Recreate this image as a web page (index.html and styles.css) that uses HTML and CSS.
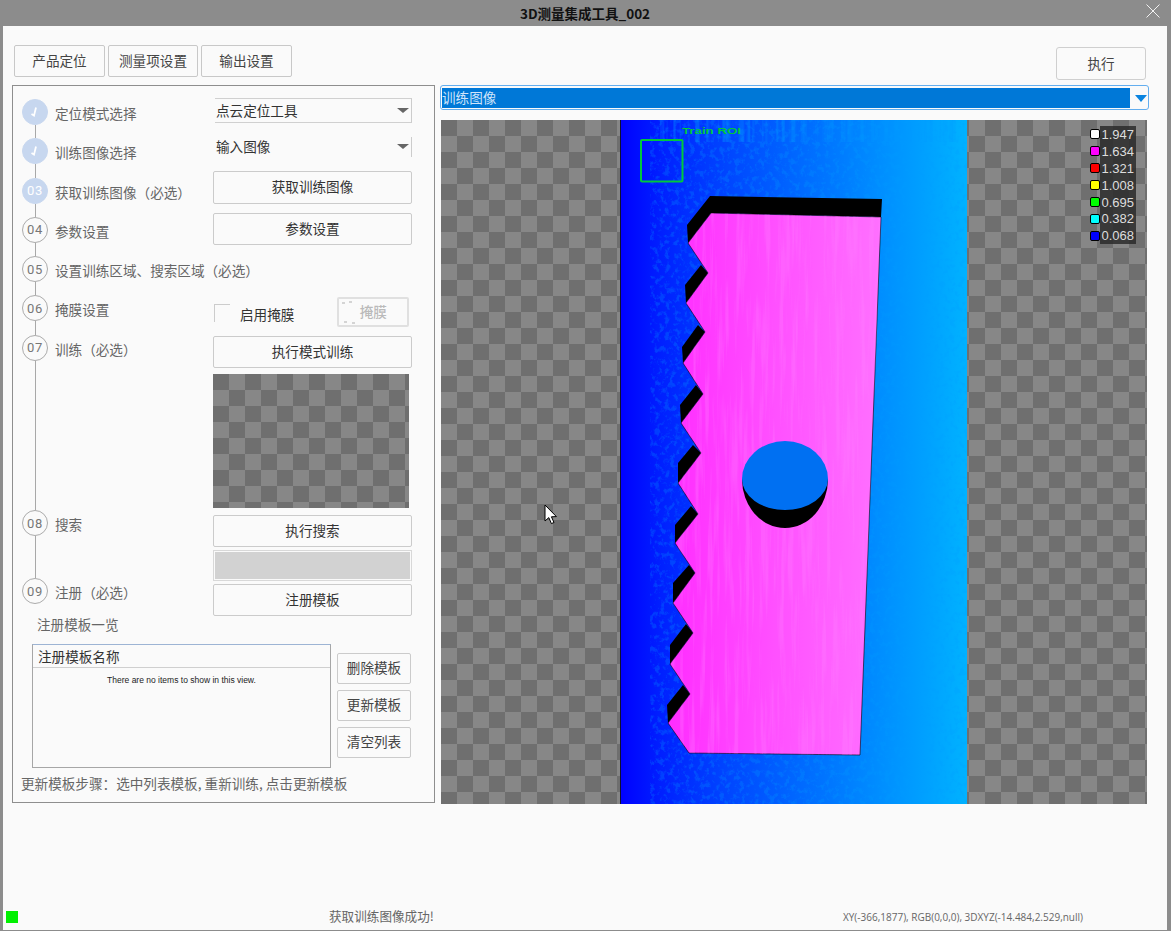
FILE: index.html
```html
<!DOCTYPE html>
<html lang="zh-CN">
<head>
<meta charset="utf-8">
<title>3D测量集成工具_002</title>
<link rel="stylesheet" href="styles.css">
</head>
<body>
<div class="window">
  <header class="titlebar">
    <span class="title">3D测量集成工具_002</span>
    <svg class="close" width="16" height="16" viewBox="0 0 16 16"><path d="M1.5 1.5 L14.5 14.5 M14.5 1.5 L1.5 14.5" stroke="#f2f2f2" stroke-width="1" fill="none"/></svg>
  </header>
  <div class="content">
    <div class="toolbar">
      <div class="tabs">
        <button class="tab">产品定位</button>
        <button class="tab">测量项设置</button>
        <button class="tab">输出设置</button>
      </div>
      <button class="run">执行</button>
    </div>
    <main class="main">
      <section class="panel">
        <div class="wizard">
          <ol class="steps">
            <li class="step">
              <div class="node"><span class="dot done"><svg width="26" height="26" viewBox="0 0 26 26"><path d="M9.5 15 L12 16.6 L14 8.5" stroke="#fff" stroke-width="1.8" fill="none"/></svg></span><i class="wire"></i></div>
              <span class="label">定位模式选择</span>
            </li>
            <li class="step">
              <div class="node"><span class="dot done"><svg width="26" height="26" viewBox="0 0 26 26"><path d="M9.5 15 L12 16.6 L14 8.5" stroke="#fff" stroke-width="1.8" fill="none"/></svg></span><i class="wire"></i></div>
              <span class="label">训练图像选择</span>
            </li>
            <li class="step">
              <div class="node"><span class="dot done">03</span><i class="wire"></i></div>
              <span class="label">获取训练图像（必选）</span>
            </li>
            <li class="step">
              <div class="node"><span class="dot">04</span><i class="wire"></i></div>
              <span class="label">参数设置</span>
            </li>
            <li class="step">
              <div class="node"><span class="dot">05</span><i class="wire"></i></div>
              <span class="label">设置训练区域、搜索区域（必选）</span>
            </li>
            <li class="step">
              <div class="node"><span class="dot">06</span><i class="wire"></i></div>
              <span class="label">掩膜设置</span>
            </li>
            <li class="step step-train">
              <div class="node"><span class="dot">07</span><i class="wire"></i></div>
              <span class="label">训练（必选）</span>
            </li>
            <li class="step step-search">
              <div class="node"><span class="dot">08</span><i class="wire"></i></div>
              <span class="label">搜索</span>
            </li>
            <li class="step">
              <div class="node"><span class="dot">09</span></div>
              <span class="label">注册（必选）</span>
            </li>
          </ol>
          <div class="controls">
            <div class="combo combo-mode"><span>点云定位工具</span><i class="caret"></i></div>
            <div class="combo combo-image"><span>输入图像</span><i class="caret"></i></div>
            <button class="btn btn-grab">获取训练图像</button>
            <button class="btn btn-param">参数设置</button>
            <div class="mask-row">
              <span class="check"></span>
              <span class="check-label">启用掩膜</span>
              <button class="btn-mask">掩膜</button>
            </div>
            <button class="btn btn-train">执行模式训练</button>
            <div class="checker train-preview"></div>
            <button class="btn btn-search">执行搜索</button>
            <div class="result-bar"></div>
            <button class="btn btn-register">注册模板</button>
          </div>
        </div>
        <div class="list-caption">注册模板一览</div>
        <div class="list-row">
          <div class="list">
            <div class="list-head">注册模板名称</div>
            <div class="list-empty">There are no items to show in this view.</div>
          </div>
          <div class="list-actions">
            <button class="btn-side">删除模板</button>
            <button class="btn-side">更新模板</button>
            <button class="btn-side">清空列表</button>
          </div>
        </div>
        <p class="hint">更新模板步骤：选中列表模板, 重新训练, 点击更新模板</p>
      </section>
      <section class="viewer">
        <div class="image-select">
          <span class="image-select-value">训练图像</span>
          <svg class="image-select-arrow" width="12" height="7" viewBox="0 0 12 7"><path d="M0 0 H12 L6 7 Z" fill="#0a84e0"/></svg>
        </div>
        <div class="checker canvas">
          <svg class="depth" width="706" height="684" viewBox="441 120 706 684">
            <defs>
              <linearGradient id="floor" x1="0" x2="1" y1="0" y2="0">
                <stop offset="0" stop-color="#0000ff"/>
                <stop offset=".12" stop-color="#0020ff"/>
                <stop offset=".3" stop-color="#0044ff"/>
                <stop offset=".5" stop-color="#0066ff"/>
                <stop offset=".75" stop-color="#008eff"/>
                <stop offset="1" stop-color="#00b2ff"/>
              </linearGradient>
              <linearGradient id="part" x1="0" x2="1" y1="0" y2="0">
                <stop offset="0" stop-color="#ff2cff"/>
                <stop offset=".5" stop-color="#ff50ff"/>
                <stop offset="1" stop-color="#ff70ff"/>
              </linearGradient>
              <filter id="speckle" x="0" y="0" width="1" height="1" color-interpolation-filters="sRGB">
                <feTurbulence type="fractalNoise" baseFrequency="0.2 0.17" numOctaves="4" seed="7"/>
                <feColorMatrix values="0 0 0 0 0  0 0 0 0 .62  0 0 0 0 1  5 0 0 0 -2.5"/>
              </filter>
              <filter id="streaks" x="0" y="0" width="1" height="1" color-interpolation-filters="sRGB">
                <feTurbulence type="fractalNoise" baseFrequency="0.22 0.003" numOctaves="2" seed="3"/>
                <feColorMatrix values="0 0 0 0 0  0 0 0 0 .6  0 0 0 0 1  4 0 0 0 -1.9"/>
              </filter>
              <filter id="sheen" x="0" y="0" width="1" height="1" color-interpolation-filters="sRGB">
                <feTurbulence type="fractalNoise" baseFrequency="0.2 0.01" numOctaves="3" seed="11"/>
                <feColorMatrix values="0 0 0 0 1  0 0 0 0 .52  0 0 0 0 1  4 0 0 0 -1.9"/>
              </filter>
              <clipPath id="partClip">
                <polygon points="711,213 881,217 860,755 689,753 668,723 690,694 670,664 693,633 673,603 695,573 675,543 698,514 678,483 701,453 681,423 703,394 683,363 705,332 686,303 708,273 688,243"/>
              </clipPath>
            </defs>
            <rect x="620" y="120" width="347" height="684" fill="url(#floor)"/>
            <rect x="650" y="120" width="317" height="684" filter="url(#speckle)" opacity=".26"/>
            <rect x="660" y="120" width="307" height="22" filter="url(#streaks)" opacity=".4"/>
            <rect x="620" y="120" width="1" height="684" fill="#101030"/>
            <g class="shadow">
              <polygon points="710,196 882,199 881,217 711,213 688,243 687,225"/>
              <polygon points="701,265 685,285 686,303 708,273"/>
              <polygon points="698,325 682,347 683,363 705,332"/>
              <polygon points="696,385 680,405 681,423 703,394"/>
              <polygon points="693,445 678,463 678,483 701,453"/>
              <polygon points="691,506 675,525 675,543 698,514"/>
              <polygon points="689,565 673,583 673,603 695,573"/>
              <polygon points="686,624 670,645 670,664 693,633"/>
              <polygon points="683,685 667,705 668,723 690,694"/>
            </g>
            <polygon points="711,213 881,217 860,755 689,753 668,723 690,694 670,664 693,633 673,603 695,573 675,543 698,514 678,483 701,453 681,423 703,394 683,363 705,332 686,303 708,273 688,243" fill="url(#part)" stroke="#000" stroke-width=".6"/>
            <g clip-path="url(#partClip)"><rect x="660" y="210" width="225" height="548" filter="url(#sheen)" opacity=".28"/></g>
            <path d="M742 479 A43 49 0 0 0 828 479 Z" fill="#000"/>
            <path d="M742 479 A43 38 0 0 1 828 479 A43 31 0 0 1 742 479 Z" fill="#0070f2"/>
            <rect x="641" y="140" width="41.5" height="41.5" rx="1" class="roi"/>
            <text x="682" y="134" class="roi-label" textLength="59" lengthAdjust="spacingAndGlyphs">Train ROI</text>
          </svg>
          <ul class="legend">
            <li><i class="swatch c1"></i><span>1.947</span></li>
            <li><i class="swatch c2"></i><span>1.634</span></li>
            <li><i class="swatch c3"></i><span>1.321</span></li>
            <li><i class="swatch c4"></i><span>1.008</span></li>
            <li><i class="swatch c5"></i><span>0.695</span></li>
            <li><i class="swatch c6"></i><span>0.382</span></li>
            <li><i class="swatch c7"></i><span>0.068</span></li>
          </ul>
          <svg class="cursor" width="14" height="22" viewBox="0 0 14 22"><path d="M1 1 V17 L4.8 13.6 L7.4 19.6 L10 18.5 L7.4 12.8 L12.4 12.6 Z" fill="#fff" stroke="#000" stroke-width="1"/></svg>
        </div>
      </section>
    </main>
    <footer class="status">
      <i class="led"></i>
      <span class="status-msg">获取训练图像成功!</span>
      <span class="status-pos">XY(-366,1877), RGB(0,0,0), 3DXYZ(-14.484,2.529,null)</span>
    </footer>
  </div>
</div>
</body>
</html>
```
FILE: styles.css
```css
* { box-sizing: border-box; }
html, body { margin: 0; padding: 0; }
body {
  width: 1171px;
  height: 931px;
  overflow: hidden;
  background: #8c8c8c;
  font-family: "Noto Sans CJK SC", "Liberation Sans", sans-serif;
  font-size: 13.6px;
  color: #333;
}
button { font: inherit; color: inherit; padding: 0; cursor: default; }
ol, ul { list-style: none; margin: 0; padding: 0; }
i { display: block; font-style: normal; }

.window { display: flex; flex-direction: column; height: 931px; padding: 0 4px 1px 3px; }

.titlebar { position: relative; flex: 0 0 26px; display: flex; align-items: center; justify-content: center; padding-bottom: 1px; }
.title { font-size: 13.5px; font-weight: 700; color: #111; }
.close { position: absolute; right: 6px; top: 3px; }

.content { flex: 1; display: flex; flex-direction: column; background: #fafafa; min-height: 0; }

.toolbar { display: flex; justify-content: space-between; align-items: flex-start; padding: 19px 21px 0 11px; height: 59px; }
.tabs { display: flex; gap: 3px; }
.tab { width: 91px; height: 32px; padding-bottom: 2px; background: #fafafa; border: 1px solid #c8c8c8; border-radius: 2px; color: #444; }
.tab:nth-child(2) { width: 90px; }
.run { width: 90px; height: 33px; padding-bottom: 2px; margin-top: 2px; background: #fafafa; border: 1px solid #cfcfcf; border-radius: 3px; color: #444; }

.main { display: flex; gap: 5px; padding-left: 9px; }

.panel { width: 423px; height: 718px; border: 1px solid #8e8e8e; display: flex; flex-direction: column; }

.wizard { display: flex; padding: 12px 0 0 9px; height: 530px; }
.steps { width: 191px; margin-top: 1px; flex: none; }
.step { display: flex; height: 39.25px; gap: 7px; }
.step-train { height: 175.5px; }
.step-search { height: 68px; }
.node { width: 26px; display: flex; flex-direction: column; align-items: center; flex: none; }
.dot {
  flex: none; width: 26px; height: 26px; border-radius: 50%;
  display: flex; align-items: center; justify-content: center;
  border: 1px solid #ababab; background: #fafafa; color: #777;
  font-family: "Roboto", sans-serif; font-size: 13px; letter-spacing: .6px;
}
.dot.done { background: #c7d7ef; border-color: #c7d7ef; color: #fff; }
.dot svg { flex: none; margin: -1px; }
.wire { flex: 1; width: 1px; background: #a8a8a8; }
.label { white-space: nowrap; line-height: 20px; margin-top: 4px; color: #666; }

.controls { width: 199px; display: flex; flex-direction: column; flex: none; }
.combo { position: relative; display: flex; align-items: center; margin-left: 2px; border-right: 1px solid #ccc; padding: 0 0 2px 1px; color: #333; }
.combo-mode { height: 25px; border-top: 1px solid #d0d0d0; border-bottom: 1px solid #d0d0d0; }
.combo-image { height: 20px; margin-top: 14px; }
.caret { position: absolute; right: 2px; top: 50%; margin-top: -3px; width: 0; height: 0; border-left: 6px solid transparent; border-right: 6px solid transparent; border-top: 5px solid #666; }

.btn { width: 199px; height: 32px; padding-bottom: 3px; background: #fafafa; border: 1px solid #cbcbcb; border-radius: 2px; flex: none; }
.btn-grab { height: 33px; margin-top: 14px; }
.btn-param { margin-top: 9px; }
.btn-train { margin-top: 9px; }
.btn-search { margin-top: 7px; }
.btn-register { margin-top: 3px; }

.mask-row { display: flex; height: 30px; margin-top: 52px; position: relative; }
.check { width: 16px; height: 18px; margin: 7px 0 0 1px; border-top: 1px solid #ccc; border-left: 1px solid #ccc; flex: none; }
.check-label { margin-left: 10px; margin-top: 7px; line-height: 20px; color: #333; }
.btn-mask { position: relative; margin-left: 43px; width: 72px; height: 30px; padding-bottom: 3px; background: #fafafa; border: 2px solid #e0e0e0; border-radius: 2px; color: #bababa; font-weight: 500; }
.btn-mask::before { content: ""; position: absolute; left: 3px; top: 3px; width: 3px; height: 2px; background: #d4d4d4; box-shadow: 7px -1px 0 #d4d4d4, 2px 19px 0 #d4d4d4, 10px 20px 0 #d4d4d4; }

.checker { background: conic-gradient(#878787 25%, #6f6f6f 0 50%, #878787 0 75%, #6f6f6f 0) 0 0 / 32px 32px; }
.train-preview { width: 196px; height: 134px; margin-top: 6px; flex: none; }
.result-bar { height: 31px; margin-top: 3px; background: #d2d2d2; border: 2px solid #fafafa; outline: 1px solid #d8d8d8; outline-offset: -1px; flex: none; }

.list-caption { margin: 0 0 0 24px; height: 20px; line-height: 17px; color: #666; }
.list-row { display: flex; gap: 6px; margin: 8px 0 0 19px; }
.list { width: 299px; height: 124px; border: 1px solid #a6a6a6; border-top-color: #9db4d4; background: #fafafa; }
.list-head { height: 23px; line-height: 23px; padding-left: 5px; color: #333; border-bottom: 1px solid #cfcfcf; }
.list-empty { text-align: center; font-family: "Liberation Sans", sans-serif; font-size: 8.5px; line-height: 13px; margin-top: 6px; color: #222; }
.list-actions { display: flex; flex-direction: column; gap: 6px; padding-top: 9px; }
.btn-side { width: 74px; height: 31px; padding-bottom: 3px; background: #fafafa; border: 1px solid #cbcbcb; border-radius: 2px; color: #444; }
.hint { margin: 5px 0 0 8px; line-height: 20px; color: #666; }

.viewer { width: 709px; }
.image-select { display: flex; align-items: center; height: 25px; border: 1px solid #63aeef; border-radius: 3px; padding: 2px 2px 1px 1px; gap: 5px; }
.image-select-value { width: 688px; height: 100%; flex: none; background: #0078d7; color: #cfe4fa; line-height: 18px; }
.image-select-arrow { flex: none; margin-top: 1px; }
.canvas { position: relative; width: 706px; height: 684px; margin: 10px 0 0 1px; overflow: hidden; }
.depth { display: block; }
.shadow polygon { fill: #000; }
.roi { fill: none; stroke: #00c83c; stroke-width: 2; }
.roi-label { fill: #00c83c; font-family: "Liberation Sans", sans-serif; font-size: 9.5px; font-weight: 700; }

.legend { position: absolute; left: 649px; top: 6px; }
.legend li { display: flex; align-items: center; height: 16.9px; }
.legend span { width: 36px; height: 100%; background: rgba(44, 44, 44, .85); color: #ddd; font-family: "Liberation Sans", sans-serif; font-size: 13px; line-height: 17px; text-align: right; padding-right: 2px; }
.swatch { width: 10px; height: 10px; border: 1.5px solid #000; border-radius: 2px; margin-right: 0; }
.c1 { background: #fff; } .c2 { background: #f0f; } .c3 { background: #f00; } .c4 { background: #ff0; }
.c5 { background: #0f0; } .c6 { background: #0ff; } .c7 { background: #00f; }
.cursor { position: absolute; left: 103px; top: 384px; }

.status { margin-top: auto; display: grid; grid-template-columns: 326px 514px 1fr; align-items: center; height: 20px; margin-bottom: 3px; }
.led { width: 12px; height: 12px; margin-left: 3px; background: #00f000; }
.status-msg { font-size: 12.6px; line-height: 18px; color: #666; white-space: nowrap; margin-top: -2px; }
.status-pos { font-family: "Open Sans", sans-serif; font-size: 10px; color: #666; white-space: nowrap; }
```
